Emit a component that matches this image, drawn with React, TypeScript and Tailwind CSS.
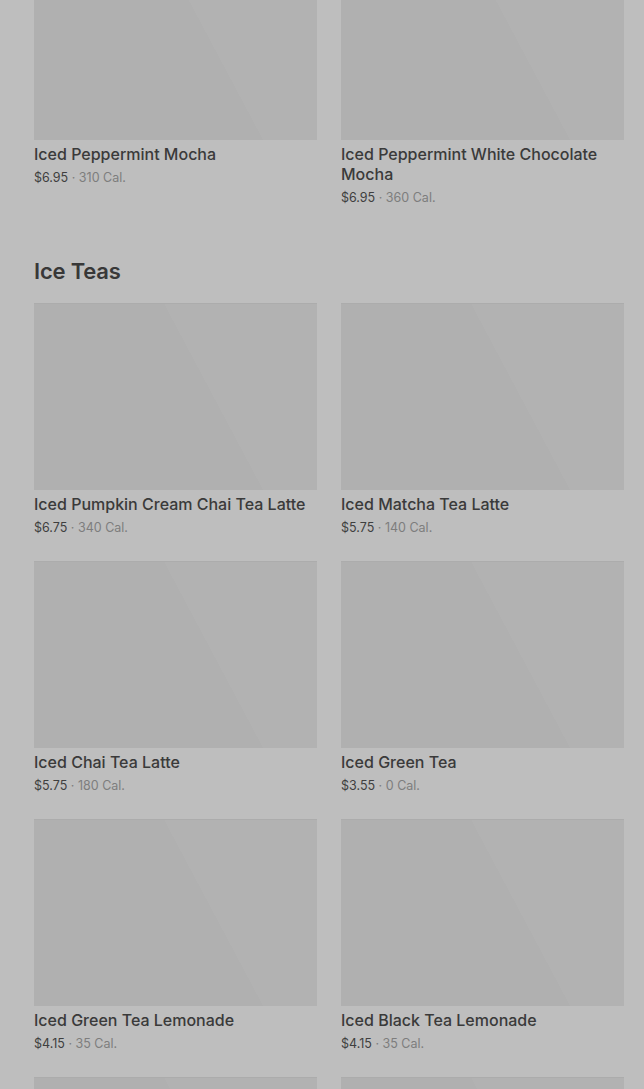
import React from "react";

type Item = { name: string; price: string; cal: string };

const top: Item[] = [
  { name: "Iced Peppermint Mocha", price: "$6.95", cal: "310 Cal." },
  { name: "Iced Peppermint White Chocolate Mocha", price: "$6.95", cal: "360 Cal." },
];

const teas: Item[] = [
  { name: "Iced Pumpkin Cream Chai Tea Latte", price: "$6.75", cal: "340 Cal." },
  { name: "Iced Matcha Tea Latte", price: "$5.75", cal: "140 Cal." },
  { name: "Iced Chai Tea Latte", price: "$5.75", cal: "180 Cal." },
  { name: "Iced Green Tea", price: "$3.55", cal: "0 Cal." },
  { name: "Iced Green Tea Lemonade", price: "$4.15", cal: "35 Cal." },
  { name: "Iced Black Tea Lemonade", price: "$4.15", cal: "35 Cal." },
];

function Img() {
  return (
    <div className="h-[187px] w-full border-t border-[#acacac] bg-[linear-gradient(62deg,#b0b0b0_60%,#b2b2b2_60%)]" />
  );
}

function Card({ item }: { item: Item }) {
  return (
    <div className="flex flex-col">
      <Img />
      <div className="mt-[4px] text-[16px] leading-[20px] font-medium text-[#3a3a3a]">
        {item.name}
      </div>
      <div className="mt-[5px] text-[12.5px] leading-[18px] text-[#3f3f3f]">
        {item.price}
        <span className="text-[#7d7d7d]"> · {item.cal}</span>
      </div>
    </div>
  );
}

export default function App() {
  return (
    <div
      className="w-[644px] h-[1089px] overflow-hidden bg-[#bebebe] pl-[34px] pr-[20px]"
      style={{ fontFamily: "Inter, 'Noto Sans', sans-serif" }}
    >
      <div className="-mt-[47px] grid grid-cols-2 gap-x-[24px]">
        {top.map((it) => (
          <Card key={it.name} item={it} />
        ))}
      </div>
      <h2 className="mt-[50px] text-[22px] leading-[28px] font-semibold text-[#383838] tracking-[-0.2px]">
        Ice Teas
      </h2>
      <div className="mt-[18px] grid grid-cols-2 gap-x-[24px] gap-y-[24px]">
        {teas.map((it) => (
          <Card key={it.name} item={it} />
        ))}
        <Img />
        <Img />
      </div>
    </div>
  );
}
